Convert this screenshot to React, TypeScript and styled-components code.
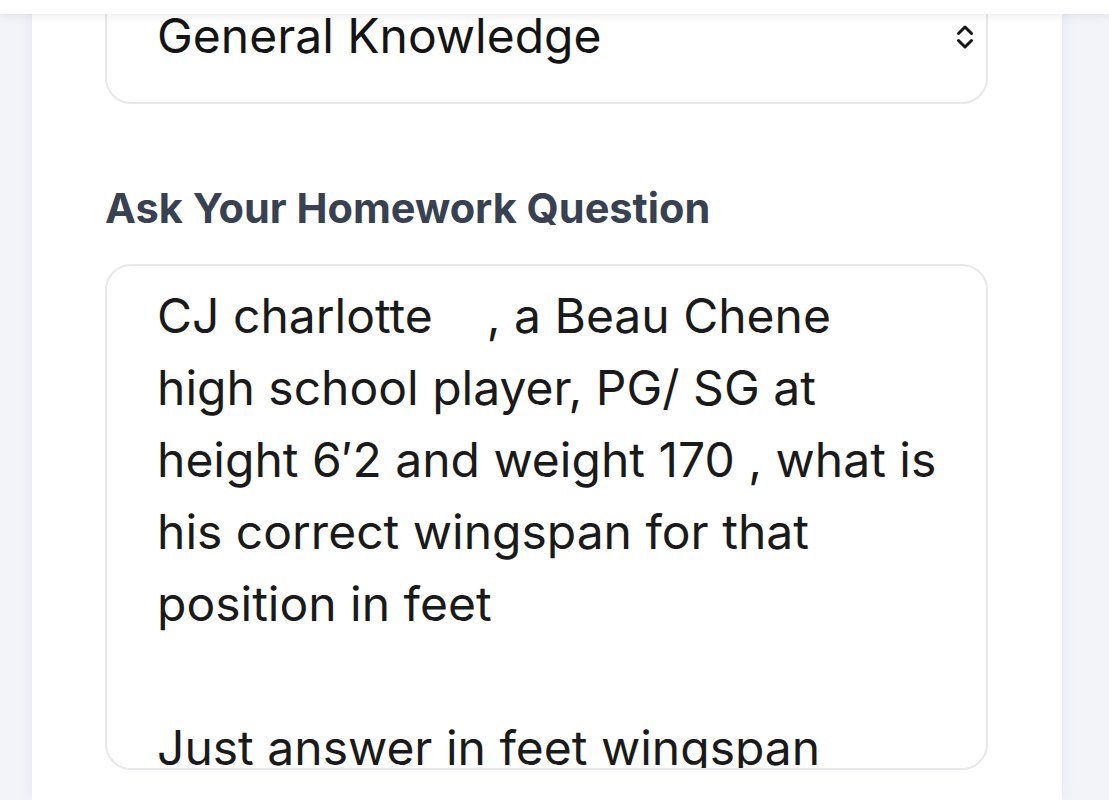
import React from "react";
import styled, { createGlobalStyle } from "styled-components";

const GlobalStyle = createGlobalStyle`
  html, body {
    margin: 0;
    padding: 0;
    background: #f3f3fa;
    font-family: Inter, "Noto Sans", sans-serif;
    overflow: hidden;
  }
`;

const TopBar = styled.header`
  position: fixed;
  top: 0;
  left: 0;
  right: 0;
  height: 14px;
  background: #ffffff;
  box-shadow: 0 2px 10px rgba(0, 0, 0, 0.08);
  z-index: 10;
`;

const Page = styled.main`
  height: 100vh;
  display: flex;
  flex-direction: column;
  padding: 0 47px 0 32px;
  box-sizing: border-box;
`;

/* scrolled a little: the card's top sits under the bar */
const Card = styled.section`
  flex: none;
  background: #ffffff;
  height: calc(100% + 24px);
  box-sizing: border-box;
  padding: 0 74px 30px 73px;
  box-shadow: 0 0 14px rgba(30, 30, 60, 0.06);
  margin-top: -24px;
  display: flex;
  flex-direction: column;
`;

const SelectBox = styled.div`
  height: 128px;
  flex-shrink: 0;
  border: 2px solid #e8e8ec;
  border-radius: 26px;
  display: flex;
  align-items: center;
  justify-content: space-between;
  padding: 0 11px 0 50px;
  box-sizing: border-box;
  font-size: 48px;
  color: #141414;
`;

const SelectText = styled.span`
  line-height: 1;
  margin-top: -8px;
`;

const Chevron = styled.svg`
  width: 20px;
  height: 28px;
  margin-top: -6px;
  color: #141414;
`;

const Label = styled.label`
  display: block;
  margin: 80px 0 32px;
  font-size: 41.5px;
  line-height: 48px;
  font-weight: 700;
  color: #374151;
`;

const Question = styled.textarea`
  flex: 1;
  display: block;
  resize: none;
  border: 2px solid #e8e8ec;
  border-radius: 26px;
  padding: 14px 40px 0 50px;
  font-family: inherit;
  font-size: 48px;
  line-height: 72px;
  color: #1a1a1a;
  background: #ffffff;
  white-space: pre;
  overflow: hidden;
  outline: none;
  box-sizing: border-box;
`;

const questionText = [
  "CJ charlotte    , a Beau Chene",
  "high school player, PG/ SG at",
  "height 6\u20322 and weight 170 , what is",
  "his correct wingspan for that",
  "position in feet",
  "",
  "Just answer in feet wingspan",
].join("\n");

export default function App() {
  return (
    <>
      <GlobalStyle />
      <TopBar />
      <Page>
        <Card>
          <SelectBox>
            <SelectText>General Knowledge</SelectText>
            <Chevron viewBox="0 0 20 28" fill="none" stroke="currentColor" strokeWidth={3} strokeLinecap="round" strokeLinejoin="round">
              <path d="M3.5 10.5 L10 4 L16.5 10.5" />
              <path d="M3.5 17.5 L10 24 L16.5 17.5" />
            </Chevron>
          </SelectBox>
          <Label htmlFor="question">Ask Your Homework Question</Label>
          <Question id="question" readOnly value={questionText} />
        </Card>
      </Page>
    </>
  );
}
